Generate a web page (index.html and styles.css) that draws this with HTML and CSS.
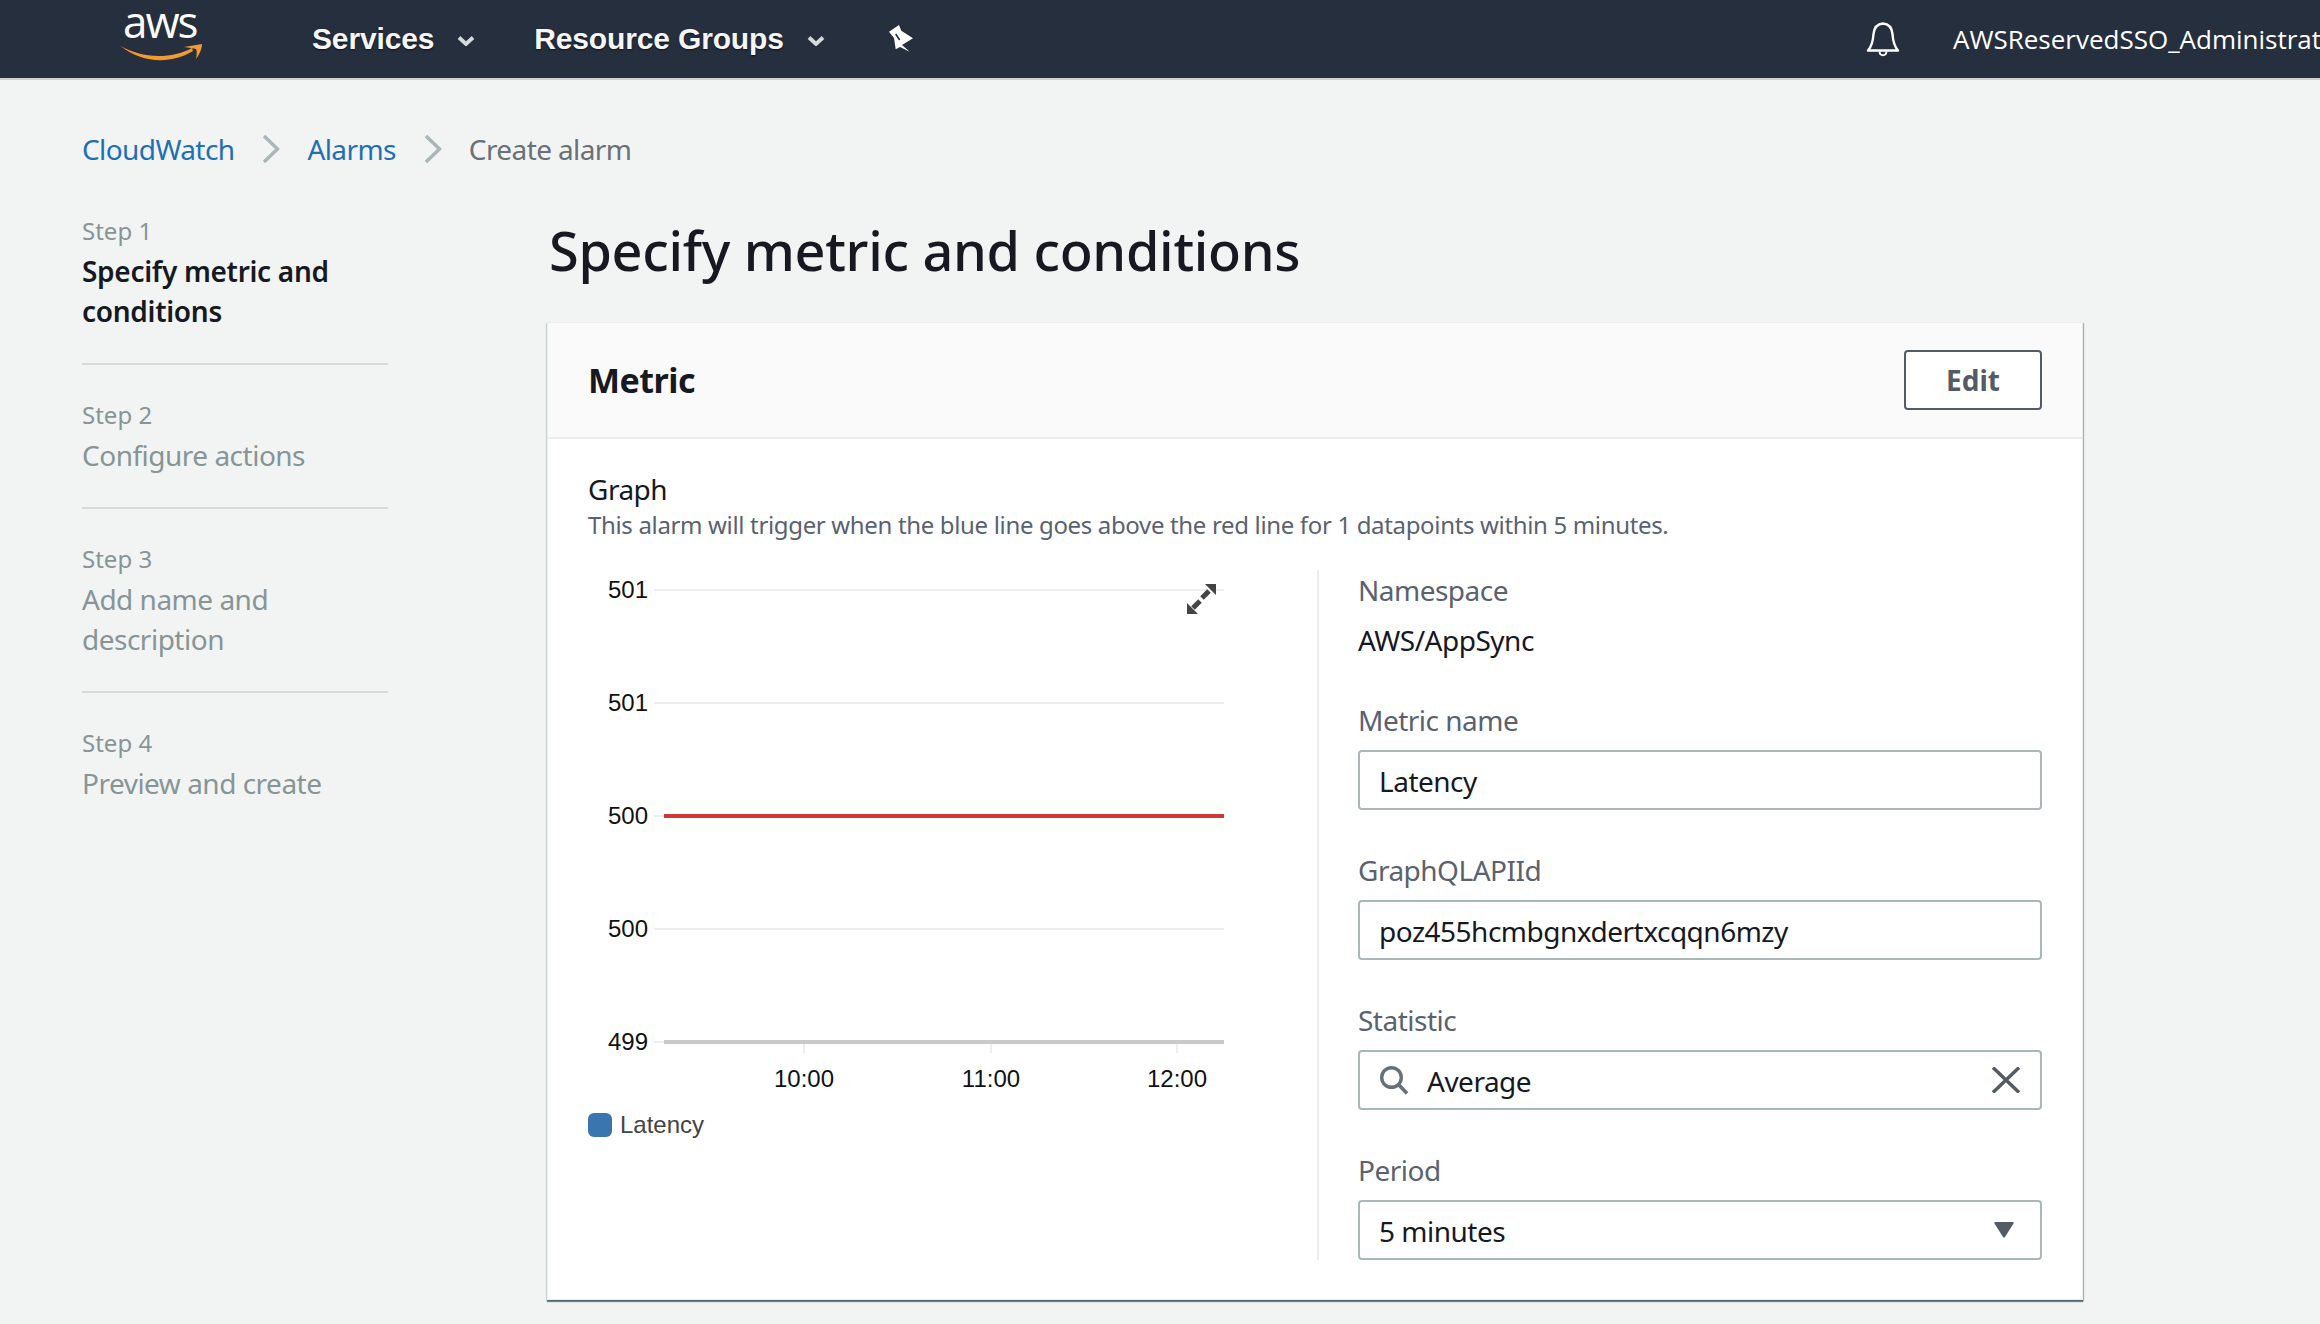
FILE: index.html
```html
<!DOCTYPE html>
<html lang="en">
<head>
<meta charset="utf-8">
<title>Create alarm</title>
<link rel="stylesheet" href="styles.css">
</head>
<body>
<header class="nav">
  <div class="logo">
    <svg width="84" height="50" viewBox="0 0 84 50">
      <text class="logo-text" x="3" y="24">aws</text>
      <path d="M0 31.5 C20 44 50 46 72 34 L73 37 C52 50 22 50 0 31.5 Z" fill="#f29b30"/>
      <path d="M64 33 L82 30 C82 35 79 41 76 45 C77 40 77 37 76 35 C73 34 69 34 64 33 Z" fill="#f29b30"/>
    </svg>
  </div>
  <a class="nav-item nav-services">Services<svg class="nav-caret" width="18" height="10" viewBox="0 0 18 10"><path d="M2 1.5 L9 8 L16 1.5" fill="none" stroke="#d5dbdb" stroke-width="3.8"/></svg></a>
  <a class="nav-item nav-groups">Resource Groups<svg class="nav-caret" width="18" height="10" viewBox="0 0 18 10"><path d="M2 1.5 L9 8 L16 1.5" fill="none" stroke="#d5dbdb" stroke-width="3.8"/></svg></a>
  <svg class="nav-pin" width="28" height="30" viewBox="0 0 28 30"><path d="M2 7.7 L12 1 L14.3 6.7 L26 14.3 L15 21 L22.7 27.7 L13 23 L8.7 25.3 L7 14 Z" fill="#fff"/><path d="M8.7 10 L12.7 16" stroke="#262f3e" stroke-width="1.6" fill="none"/></svg>
  <svg class="nav-bell" width="34" height="36" viewBox="0 0 34 36"><path d="M17 2.5 C11 3 8 7.5 7.5 13 C7 21 6 25 2 29.5 L32 29.5 C28 25 27 21 26.5 13 C26 7.5 23 3 17 2.5 Z" fill="none" stroke="#fff" stroke-width="2.4" stroke-linejoin="round"/><path d="M13.5 30.5 C14 35.5 20 35.5 20.5 30.5" fill="none" stroke="#fff" stroke-width="2"/></svg>
  <span class="nav-user">AWSReservedSSO_AdministratorAccess</span>
</header>

<div class="page">
  <nav class="crumbs">
    <a class="crumb-link">CloudWatch</a>
    <svg class="crumb-sep" width="18" height="30" viewBox="0 0 18 30"><path d="M2 2 L15.5 15 L2 28" fill="none" stroke="#aab7b8" stroke-width="3.6"/></svg>
    <a class="crumb-link">Alarms</a>
    <svg class="crumb-sep" width="18" height="30" viewBox="0 0 18 30"><path d="M2 2 L15.5 15 L2 28" fill="none" stroke="#aab7b8" stroke-width="3.6"/></svg>
    <span class="crumb-current">Create alarm</span>
  </nav>

  <div class="layout">
    <aside class="steps">
      <div class="step">
        <div class="step-num">Step 1</div>
        <div class="step-title step-active">Specify metric and conditions</div>
      </div>
      <div class="step">
        <div class="step-num">Step 2</div>
        <div class="step-title">Configure actions</div>
      </div>
      <div class="step">
        <div class="step-num">Step 3</div>
        <div class="step-title">Add name and description</div>
      </div>
      <div class="step step-last">
        <div class="step-num">Step 4</div>
        <div class="step-title">Preview and create</div>
      </div>
    </aside>

    <main class="main">
      <h1 class="title">Specify metric and conditions</h1>
      <section class="card">
        <div class="card-head">
          <h2 class="card-title">Metric</h2>
          <button class="btn">Edit</button>
        </div>
        <div class="card-body">
          <div class="graph-title">Graph</div>
          <div class="graph-desc">This alarm will trigger when the blue line goes above the red line for 1 datapoints within 5 minutes.</div>
          <div class="columns">
            <div class="chart">
              <svg class="chart-svg" width="640" height="530" viewBox="588 570 640 530">
                <g class="grid">
                  <path d="M654 590 H1224 M654 703 H1224 M654 816 H664 M654 929 H1224 M654 1042 H664 M804 1044 V1053 M991 1044 V1053 M1177 1044 V1053"/>
                </g>
                <path d="M664 816 H1224" stroke="#cc3a33" stroke-width="4" fill="none"/>
                <path d="M664 1042 H1224" stroke="#c9c9c9" stroke-width="4" fill="none"/>
                <g class="y-labels">
                  <text x="648" y="598">501</text>
                  <text x="648" y="711">501</text>
                  <text x="648" y="824">500</text>
                  <text x="648" y="937">500</text>
                  <text x="648" y="1050">499</text>
                </g>
                <g class="x-labels">
                  <text x="804" y="1087">10:00</text>
                  <text x="991" y="1087">11:00</text>
                  <text x="1177" y="1087">12:00</text>
                </g>
                <path d="M1205 584 H1216 V595 Z M1187 603 V614 H1198 Z" fill="#444"/>
                <path d="M1209 591 L1202 598 M1193 608 L1200 601" stroke="#444" stroke-width="5" fill="none"/>
              </svg>
              <div class="legend"><span class="swatch"></span><span class="legend-label">Latency</span></div>
            </div>
            <div class="fields">
              <div class="field">
                <div class="label">Namespace</div>
                <div class="value">AWS/AppSync</div>
              </div>
              <div class="field">
                <div class="label">Metric name</div>
                <div class="input"><span class="input-text">Latency</span></div>
              </div>
              <div class="field">
                <div class="label">GraphQLAPIId</div>
                <div class="input"><span class="input-text">poz455hcmbgnxdertxcqqn6mzy</span></div>
              </div>
              <div class="field">
                <div class="label">Statistic</div>
                <div class="input">
                  <svg class="search-icon" width="30" height="30" viewBox="0 0 30 30"><circle cx="12.5" cy="12.5" r="9.8" fill="none" stroke="#687078" stroke-width="3.4"/><path d="M19.5 19.5 L28 28.5" stroke="#687078" stroke-width="3.6"/></svg>
                  <span class="input-text">Average</span>
                  <svg class="clear-icon" width="28" height="26" viewBox="0 0 28 26"><path d="M1 0.5 L27 25.5 M27 0.5 L1 25.5" stroke="#545b64" stroke-width="3.4" fill="none"/></svg>
                </div>
              </div>
              <div class="field">
                <div class="label">Period</div>
                <div class="input">
                  <span class="input-text">5 minutes</span>
                  <svg class="caret-icon" width="20" height="16" viewBox="0 0 20 16"><path d="M1 0 H19 Q20 0 19.5 1.5 L11 15 Q10 16 9 15 L0.5 1.5 Q0 0 1 0 Z" fill="#545b64"/></svg>
                </div>
              </div>
            </div>
          </div>
        </div>
      </section>
    </main>
  </div>
</div>
</body>
</html>
```
FILE: styles.css
```css
* { box-sizing: border-box; }
html, body { margin: 0; height: 100%; }
body {
  width: 2320px;
  height: 1324px;
  overflow: hidden;
  background: #f2f4f4;
  font-family: "Noto Sans", sans-serif;
  color: #16191f;
}
.nav {
  height: 80px;
  background: #262f3e;
  border-bottom: 2px solid #cfd1d1;
  display: flex;
  align-items: center;
  overflow: hidden;
  white-space: nowrap;
  color: #fff;
}
.logo { margin-left: 120px; width: 84px; height: 50px; flex: none; }
.logo svg { display: block; }
.logo-text { font-family: "Open Sans", sans-serif; font-size: 44px; letter-spacing: -2px; fill: #fff; }
.nav-item {
  font-family: "Liberation Sans", sans-serif;
  font-weight: 700;
  font-size: 30px;
  letter-spacing: -0.15px;
  color: #f6f6f6;
  text-shadow: 0 1px 2px rgba(0, 0, 0, 0.6);
  display: flex;
  align-items: center;
  flex: none;
}
.nav-services { margin-left: 108px; }
.nav-groups { margin-left: 59px; }
.nav-caret { margin-left: 23px; margin-top: 4px; }
.nav-pin { margin-left: 62px; flex: none; }
.nav-bell { margin-left: auto; flex: none; }
.nav-user {
  font-family: "Open Sans", sans-serif;
  font-size: 26px;
  margin-left: 53px;
  width: 367px;
  overflow: hidden;
  flex: none;
}
.page { padding: 0 0 0 82px; }
.crumbs {
  display: flex;
  align-items: center;
  height: 30px;
  margin-top: 54px;
  font-size: 28px;
  letter-spacing: -0.6px;
}
.crumb-link { color: #1f6fb5; }
.crumb-current { color: #687078; }
.crumb-sep { margin: 0 27px 0 28px; flex: none; }
.layout { display: flex; margin-top: 47px; }
.steps { width: 306px; flex: none; margin-right: 159px; }
.step { padding-bottom: 32px; margin-bottom: 30px; border-bottom: 2px solid #d5dbdb; }
.step-last { border-bottom: 0; }
.step-num { font-size: 24px; line-height: 40px; color: #879596; }
.step-title { font-size: 28px; line-height: 40px; color: #879596; letter-spacing: -0.5px; }
.step-active { color: #16191f; font-weight: 600; letter-spacing: -0.3px; }
.main { width: 1536px; flex: none; }
.title { font-size: 54px; font-weight: 500; line-height: 70px; margin: 4px 0 37px 2px; letter-spacing: -0.3px; }
.card {
  height: 978px;
  background: #fff;
  border: 1px solid #eceeee;
  box-shadow: 0 2px 1px rgba(0, 28, 36, 0.5), 1px 1px 1px rgba(0, 28, 36, 0.25), -1px 1px 1px rgba(0, 28, 36, 0.08);
}
.card-head {
  height: 116px;
  background: #fafafa;
  border-bottom: 2px solid #eaeded;
  display: flex;
  align-items: center;
  justify-content: space-between;
  padding: 0 40px;
}
.card-title { font-size: 34px; font-weight: 700; margin: 0; letter-spacing: -0.5px; }
.btn {
  width: 138px;
  height: 60px;
  background: #fff;
  border: 2px solid #545b64;
  border-radius: 4px;
  font-family: inherit;
  font-size: 28px;
  font-weight: 700;
  color: #545b64;
  padding: 0;
}
.card-body { padding: 30px 40px 0; }
.graph-title { font-size: 28px; line-height: 40px; letter-spacing: -0.5px; }
.graph-desc { font-size: 24px; line-height: 32px; color: #5a6270; letter-spacing: -0.34px; }
.columns { display: flex; margin-top: 29px; }
.chart { width: 729px; flex: none; }
.chart-svg { display: block; }
.grid path { stroke: #eeeeee; stroke-width: 2; fill: none; }
.y-labels text {
  font-family: "Liberation Sans", sans-serif;
  font-size: 24px;
  text-anchor: end;
  fill: #111;
}
.x-labels text {
  font-family: "Liberation Sans", sans-serif;
  font-size: 24px;
  text-anchor: middle;
  fill: #111;
}
.legend { display: flex; align-items: center; margin-top: 11px; }
.swatch { width: 24px; height: 24px; border-radius: 6px; background: #3a75b0; }
.legend-label {
  font-family: "Liberation Sans", sans-serif;
  font-size: 24px;
  color: #444;
  margin-left: 8px;
}
.fields {
  flex: 1;
  height: 690px;
  border-left: 2px solid #eaeded;
  padding-left: 39px;
  letter-spacing: -0.5px;
}
.field { margin-bottom: 40px; }
.label { font-size: 28px; line-height: 40px; color: #5a6270; margin-bottom: 10px; }
.value { font-size: 28px; line-height: 40px; color: #16191f; }
.input {
  height: 60px;
  border: 2px solid #aab7b8;
  border-radius: 4px;
  background: #fff;
  display: flex;
  align-items: center;
  padding: 0 18px 0 19px;
  font-size: 28px;
  color: #16191f;
}
.search-icon { flex: none; margin-right: 18px; }
.input-text { flex: 1; padding-top: 2px; }
.clear-icon { flex: none; margin-right: 2px; }
.caret-icon { flex: none; margin-right: 8px; }
```
